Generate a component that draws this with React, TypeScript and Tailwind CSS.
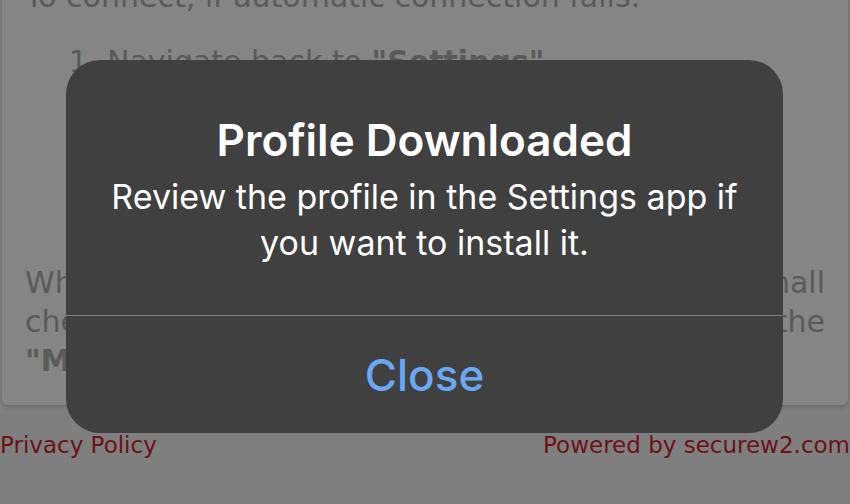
export default function App() {
  const steps = [
    <>
      Navigate back to <b>"Settings"</b>
    </>,
    <>Tap on "Wi-Fi"</>,
    <>Select your network</>,
    <>Enter your username</>,
    <>Tap "Join"</>,
  ];

  return (
    <div className="relative h-[504px] w-[850px] overflow-hidden bg-[#7f7f7f] font-['DejaVu_Sans',sans-serif]">
      <div className="mx-[2px] -mt-[23px] rounded-b-[6px] bg-[#858585] px-[23px] pb-[25px] text-[30px] leading-[39px] text-[#5a5a5a] shadow-[0_2px_5px_rgba(0,0,0,0.18)]">
        <p>To connect, if automatic connection fails:</p>
        <ol className="mt-[26px] list-decimal pl-[82px]">
          {steps.map((s, i) => (
            <li key={i}>{s}</li>
          ))}
        </ol>
        <div className="mt-[26px]">
          <div className="flex justify-between">
            <span>When the profile is installed, you</span>
            <span>shall</span>
          </div>
          <div className="flex justify-between">
            <span>check the box and then tap on</span>
            <span>the</span>
          </div>
          <div>
            <b>"Manage Profiles"</b> section.
          </div>
        </div>
      </div>

      <div className="mt-[27px] flex justify-between text-[23px] leading-[1.2] text-[#6c1118]">
        <span>Privacy Policy</span>
        <span>Powered by securew2.com</span>
      </div>

      {/* alert */}
      <div className="absolute left-[66px] top-[60px] flex h-[373px] w-[717px] flex-col rounded-[34px] bg-[#404040] font-['Inter',sans-serif] text-white">
        <div className="flex h-[255px] flex-col items-center pt-[56px] text-center">
          <h1 className="text-[44px] font-semibold leading-[48px]">Profile Downloaded</h1>
          <p className="mt-[10px] text-[34px] leading-[46px]">
            Review the profile in the Settings app if
            <br />
            you want to install it.
          </p>
        </div>
        <div className="h-px bg-[#7d7d7d]" />
        <button className="flex flex-1 items-center justify-center text-[44px] font-medium leading-none text-[#6aa8f5]">
          Close
        </button>
      </div>
    </div>
  );
}
